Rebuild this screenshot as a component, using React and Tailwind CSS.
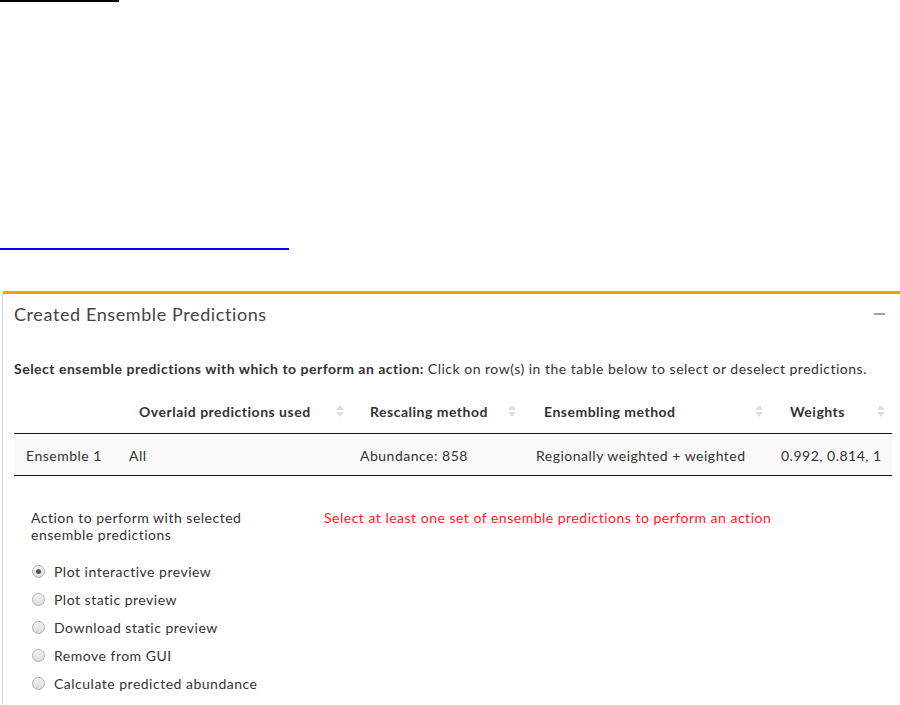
import React, { useState } from "react";

const font = { fontFamily: "Lato, 'Open Sans', sans-serif" };

const SortIcon = () => (
  <span className="flex flex-col items-center gap-[2px] w-[8px]">
    <span className="block w-0 h-0 border-l-[4px] border-r-[4px] border-b-[5px] border-l-transparent border-r-transparent border-b-[#dddddd]" />
    <span className="block w-0 h-0 border-l-[4px] border-r-[4px] border-t-[5px] border-l-transparent border-r-transparent border-t-[#dddddd]" />
  </span>
);

const actions = [
  "Plot interactive preview",
  "Plot static preview",
  "Download static preview",
  "Remove from GUI",
  "Calculate predicted abundance",
];

const App = () => {
  const [action, setAction] = useState(0);

  return (
    <div className="relative w-[900px] h-[705px] bg-white overflow-hidden text-[#333333] text-[14px] tracking-[0.5px]" style={font}>
      {/* stray underline fragments above the box */}
      <div className="h-[2px] w-[119px] bg-black" />
      <div className="mt-[246px] h-[2px] w-[289px] bg-[#0000ff]" />

      {/* BOX */}
      <div className="mt-[41px] ml-[2px] border-t-[3px] border-t-[#f39c12] border-l border-l-[#d2d6de] rounded-tl-[3px] h-[420px]">
        <div className="flex items-center justify-between pl-[11px] pr-[15px] h-[40px]">
          <h3 className="text-[18px] text-[#444444] leading-none tracking-[0.6px]">Created Ensemble Predictions</h3>
          <span className="block w-[11px] h-[2px] bg-[#97a0b3]" />
        </div>

        <div className="pl-[11px] pr-[9px] pt-[26px]">
          <p className="leading-[18px]">
            <span className="font-bold">Select ensemble predictions with which to perform an action: </span>
            Click on row(s) in the table below to select or deselect predictions.
          </p>

          <table className="mt-[22px] w-[878px] border-collapse">
            <thead>
              <tr className="border-b border-b-[#111111] h-[33px] font-bold">
                <th className="w-[105px]" />
                <th className="w-[231px] text-left pl-[20px] pr-[6px]">
                  <div className="flex items-center justify-between pb-[10px]">Overlaid predictions used<SortIcon /></div>
                </th>
                <th className="w-[176px] text-left pl-[20px] pr-[10px]">
                  <div className="flex items-center justify-between pb-[10px]">Rescaling method<SortIcon /></div>
                </th>
                <th className="w-[245px] text-left pl-[18px] pr-[8px]">
                  <div className="flex items-center justify-between pb-[10px]">Ensembling method<SortIcon /></div>
                </th>
                <th className="text-left pl-[19px] pr-[7px]">
                  <div className="flex items-center justify-between pb-[10px]">Weights<SortIcon /></div>
                </th>
              </tr>
            </thead>
            <tbody>
              <tr className="bg-[#f9f9f9] border-b border-b-[#111111] h-[42px]">
                <td className="pl-[12px] pt-[3px]">Ensemble 1</td>
                <td className="pl-[10px] pt-[3px]">All</td>
                <td className="pl-[10px] pt-[3px]">Abundance: 858</td>
                <td className="pl-[10px] pt-[3px]">Regionally weighted + weighted</td>
                <td className="pl-[10px] pt-[3px]">0.992, 0.814, 1</td>
              </tr>
            </tbody>
          </table>

          <div className="flex mt-[33px]">
            <div className="w-[310px] pl-[17px]">
              <p className="leading-[17px] w-[230px]">Action to perform with selected ensemble predictions</p>
              <div className="mt-[15px] flex flex-col">
                {actions.map((a, i) => (
                  <label key={a} className="flex items-center h-[28px] gap-[9px] cursor-pointer" onClick={() => setAction(i)}>
                    <span className="w-[13px] h-[13px] rounded-full border border-[#b0b0b0] bg-gradient-to-b from-[#f4f4f4] to-[#dcdcdc] flex items-center justify-center ml-[1px]">
                      {action === i && <span className="w-[5px] h-[5px] rounded-full bg-[#555555]" />}
                    </span>
                    {a}
                  </label>
                ))}
              </div>
            </div>
            <p className="leading-[17px] text-[#ff1a1a]">Select at least one set of ensemble predictions to perform an action</p>
          </div>
        </div>
      </div>
    </div>
  );
};

export default App;
